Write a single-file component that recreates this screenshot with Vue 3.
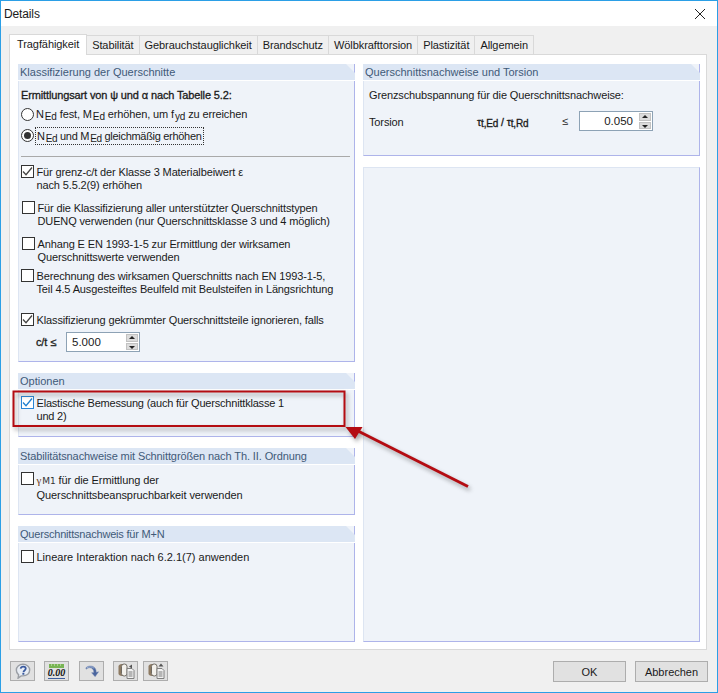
<template>
  <div class="dialog">
    <header class="titlebar">
      <span>Details</span>
      <svg class="close" width="12" height="12" viewBox="0 0 12 12"><path d="M1 1l10 10M11 1L1 11" stroke="#222" stroke-width="1" /></svg>
    </header>

    <div class="body">
      <nav class="tabs">
        <div v-for="(t, i) in tabs" :key="t" class="tab" :class="{ active: i === 0 }">{{ t }}</div>
      </nav>

      <section class="panel">
        <div class="col">
          <div class="group g1">
            <h3 class="group-head">Klassifizierung der Querschnitte</h3>
            <div class="group-body">
              <p class="lead">Ermittlungsart von ψ und α nach Tabelle 5.2:</p>
              <div class="radio-row r1">
                <span class="radio"></span>
                <span class="txt">N<sub>Ed</sub> fest, M<sub>Ed</sub> erhöhen, um f<sub>yd</sub> zu erreichen</span>
              </div>
              <div class="radio-row r2">
                <span class="radio on"></span>
                <span class="txt focus">N<sub>Ed</sub> und M<sub>Ed</sub> gleichmäßig erhöhen</span>
              </div>
              <hr class="sep" />
              <label class="check c1">
                <span class="box"><svg width="11" height="11" viewBox="0 0 11 11"><path d="M1 5.500l3 3.200L10 1.500" fill="none" stroke="#444" stroke-width="1.300" /></svg></span>
                <span class="txt">Für grenz-c/t der Klasse 3 Materialbeiwert ε<br />nach 5.5.2(9) erhöhen</span>
              </label>
              <label class="check c2">
                <span class="box"></span>
                <span class="txt">Für die Klassifizierung aller unterstützter Querschnittstypen<br />DUENQ verwenden (nur Querschnittsklasse 3 und 4 möglich)</span>
              </label>
              <label class="check c3">
                <span class="box"></span>
                <span class="txt">Anhang E EN 1993-1-5 zur Ermittlung der wirksamen<br />Querschnittswerte verwenden</span>
              </label>
              <label class="check c4">
                <span class="box"></span>
                <span class="txt">Berechnung des wirksamen Querschnitts nach EN 1993-1-5,<br />Teil 4.5 Ausgesteiftes Beulfeld mit Beulsteifen in Längsrichtung</span>
              </label>
              <label class="check c5">
                <span class="box"><svg width="11" height="11" viewBox="0 0 11 11"><path d="M1 5.500l3 3.200L10 1.500" fill="none" stroke="#444" stroke-width="1.300" /></svg></span>
                <span class="txt">Klassifizierung gekrümmter Querschnittsteile ignorieren, falls</span>
              </label>
              <div class="ct-row">
                <span class="ct-label">c/t ≤</span>
                <div class="spin ct-spin">
                  <span class="spin-val left">5.000</span>
                  <span class="spin-btns"><i class="up"></i><i class="down"></i></span>
                </div>
              </div>
            </div>
          </div>

          <div class="group g2">
            <h3 class="group-head">Optionen</h3>
            <div class="group-body">
              <label class="check c6">
                <span class="box blue"><svg width="11" height="11" viewBox="0 0 11 11"><path d="M1 5.500l3 3.200L10 1.500" fill="none" stroke="#1e7fd0" stroke-width="1.300" /></svg></span>
                <span class="txt">Elastische Bemessung (auch für Querschnittklasse 1<br />und 2)</span>
              </label>
            </div>
          </div>

          <div class="group g3">
            <h3 class="group-head">Stabilitätsnachweise mit Schnittgrößen nach Th. II. Ordnung</h3>
            <div class="group-body">
              <label class="check c7">
                <span class="box"></span>
                <span class="txt"><em class="gamma">γ<small>M1</small></em> für die Ermittlung der<br />Querschnittsbeanspruchbarkeit verwenden</span>
              </label>
            </div>
          </div>

          <div class="group g4">
            <h3 class="group-head">Querschnittsnachweis für M+N</h3>
            <div class="group-body">
              <label class="check c8">
                <span class="box"></span>
                <span class="txt">Lineare Interaktion nach 6.2.1(7) anwenden</span>
              </label>
            </div>
          </div>
        </div>

        <div class="col">
          <div class="group g5">
            <h3 class="group-head">Querschnittsnachweise und Torsion</h3>
            <div class="group-body">
              <p class="plain">Grenzschubspannung für die Querschnittsnachweise:</p>
              <div class="torsion">
                <span class="tor-label">Torsion</span>
                <span class="tor-math">τ<sub>t,Ed</sub> / τ<sub>t,Rd</sub></span>
                <span class="tor-le">≤</span>
                <div class="spin tor-spin">
                  <span class="spin-val">0.050</span>
                  <span class="spin-btns"><i class="up"></i><i class="down"></i></span>
                </div>
              </div>
            </div>
          </div>
          <div class="group g6"></div>
        </div>
      </section>

      <footer class="footer">
        <div class="tools">
          <button class="tool">
            <svg width="18" height="16" viewBox="0 0 20 18">
              <path d="M10 1.500c4.400 0 7.500 2.800 7.500 6.500s-3.100 6.500-7.500 6.500H8L4.500 17l.6-3.600C3.400 12.200 2.500 10.200 2.500 8 2.500 4.300 5.600 1.500 10 1.500z" fill="#e8edf4" stroke="#9a9ea4" stroke-width="1.600" />
              <path d="M7.300 6.300C7.700 4.700 9 4 10.300 4c1.700 0 2.800 1 2.800 2.300 0 2-2.600 2.100-2.600 4" fill="none" stroke="#3a5a9e" stroke-width="2" />
              <rect x="9.300" y="11.200" width="2.200" height="2" fill="#3a5a9e" />
            </svg>
          </button>
          <button class="tool">
            <span class="zero">
              <svg width="15" height="4" viewBox="0 0 15 4"><rect width="15" height="4" fill="#78b454" /><path d="M2.500 0v2M5.500 0v2M8.500 0v2M11.500 0v2" stroke="#a8d28e" stroke-width="1" /></svg>
              <span class="zero-num">0.00</span>
            </span>
          </button>
          <button class="tool t3">
            <svg width="18" height="16" viewBox="0 0 20 18">
              <path d="M3 5.500C6 2.500 11 2.500 13.500 5.800c1 1.400 1.300 3 1.200 4.700l2.800-.7-4 5.700-4-4.600 2.500-.3c0-1.700-.4-3-1.300-3.900C9 4.900 6 4.800 3.500 7z" fill="#4a659e" stroke="#7b8db3" stroke-width=".5" />
              <path d="M4 5.600C6.500 3.800 10 3.800 12.500 6" fill="none" stroke="#a9bcdd" stroke-width="1" />
            </svg>
          </button>
          <button class="tool gap-s">
            <svg width="20" height="18" viewBox="0 0 20 18">
              <path d="M2.500 4.500C2.500 3 4 2 6 2h1.500v12H6c-2 0-3.500-1-3.500-2.500z" fill="#8d7a62" />
              <rect x="5.500" y="2" width="5.500" height="12" rx="2.500" fill="#f3f1ec" stroke="#6f6a62" />
              <path d="M11 6.500h5l2 2v8h-7z" fill="#f2f2f2" stroke="#808080" />
              <path d="M12.500 10h4M12.500 12h4M12.500 14h4" stroke="#7a7a7a" />
              <path d="M13 4.500l3-2v4z" fill="#555" />
            </svg>
          </button>
          <button class="tool">
            <svg width="20" height="18" viewBox="0 0 20 18">
              <path d="M2.500 4.500C2.500 3 4 2 6 2h1.500v12H6c-2 0-3.500-1-3.500-2.500z" fill="#8d7a62" />
              <rect x="5.500" y="2" width="5.500" height="12" rx="2.500" fill="#f3f1ec" stroke="#6f6a62" />
              <path d="M11 6.500h5l2 2v8h-7z" fill="#f2f2f2" stroke="#808080" />
              <path d="M12.500 10h4M12.500 12h4M12.500 14h4" stroke="#7a7a7a" />
              <path d="M15 1.500l2.500 3h-5z" fill="#555" />
            </svg>
          </button>
        </div>
        <div class="actions">
          <button class="btn">OK</button>
          <button class="btn">Abbrechen</button>
        </div>
      </footer>
    </div>

    <!-- rote Markierung liegt frei ueber dem Dialog -->
    <svg class="annot" width="718" height="693" viewBox="0 0 718 693">
      <rect x="13.500" y="391.500" width="331" height="34.500" fill="none" stroke="#b40c12" stroke-width="2" />
      <path d="M468 486.500L358 431" stroke="#b40c12" stroke-width="3" fill="none" />
      <path d="M345.500 427L362.500 427 355 439z" fill="#b40c12" />
    </svg>
  </div>
</template>

<script setup>
const tabs = [
  'Tragfähigkeit',
  'Stabilität',
  'Gebrauchstauglichkeit',
  'Brandschutz',
  'Wölbkrafttorsion',
  'Plastizität',
  'Allgemein',
]
</script>

<style scoped>
.dialog {
  position: relative;
  box-sizing: border-box;
  width: 718px;
  height: 693px;
  border: 1px solid #2b9fe6;
  background: #f0f0f0;
  display: flex;
  flex-direction: column;
  overflow: hidden;
  font-family: "Liberation Sans", Arial, sans-serif;
  font-size: 11px;
  letter-spacing: -.13px;
  color: #1a1a1a;
}
.titlebar {
  height: 25px;
  flex: none;
  background: #fff;
  display: flex;
  align-items: center;
  justify-content: space-between;
  padding: 0 11px 0 3px;
  font-size: 12px;
}
.close { display: block; }

.body {
  flex: 1;
  display: flex;
  flex-direction: column;
  padding: 8px 10px 0 8px;
}
.tabs {
  display: flex;
  align-items: flex-end;
  height: 20px;
  flex: none;
  position: relative;
  z-index: 1;
}
.tab {
  height: 18px;
  line-height: 19px;
  padding: 0 5px;
  background: #f0f0f0;
  border: 1px solid #d9d9d9;
  border-bottom: 0;
  border-left: 0;
  box-sizing: content-box;
  white-space: nowrap;
  letter-spacing: -.08px;
}
.tab.active {
  height: 20px;
  line-height: 19px;
  padding: 0 7px;
  background: #fff;
  border-left: 1px solid #d9d9d9;
  margin-bottom: -1px;
}

.panel {
  box-sizing: border-box;
  width: 698px;
  height: 596px;
  flex: none;
  background: #fff;
  border: 1px solid #d9d9d9;
  padding: 9px 6px 7px 8px;
  display: grid;
  grid-template-columns: 337px 337px;
  column-gap: 8px;
}
.col {
  display: flex;
  flex-direction: column;
  gap: 11px;
  min-height: 0;
}
.group {
  box-sizing: border-box;
  background: #eff3f9;
  border-left: 1px solid #dde5f2;
  border-right: 1px solid #aeb4ea;
  border-bottom: 1px solid #aeb4ea;
}
.g1 { height: 298px; }
.g2 { height: 64px; }
.g3 { height: 67px; }
.g4 { flex: 1; }
.g5 { height: 92px; }
.g6 { flex: 1; border-top: 1px solid #dde5f2; }

.group-head {
  margin: 0 -1px 0 -1px;
  height: 16px;
  line-height: 16px;
  padding-left: 2px;
  background: #dce6f4;
  color: #3f5a78;
  font-size: 11px;
  font-weight: 400;
  letter-spacing: 0;
  clip-path: polygon(0 0, calc(100% - 9px) 0, 100% 9px, 100% 100%, 0 100%);
  border-bottom: 1px solid #fff;
  box-sizing: content-box;
}
.g3 .group-head { letter-spacing: -.1px; }
.g4 .group-head { letter-spacing: -.2px; }
.group-body { padding: 0 2px; }

p { margin: 0; }
.lead {
  margin-top: 7px;
  height: 14px;
  line-height: 14px;
  -webkit-text-stroke: .3px #1a1a1a;
}
.plain {
  margin: 7px 0 0 3px;
  line-height: 14px;
  height: 14px;
}
sub {
  font-size: 10px;
  vertical-align: -2px;
  line-height: 0;
  margin-left: 1px;
}
.txt { line-height: 13px; }

.radio-row {
  display: flex;
  align-items: center;
  height: 17px;
  gap: 2px;
}
.r1 { margin-top: 4px; }
.r2 { margin-top: 4px; }
.radio {
  box-sizing: border-box;
  width: 13px;
  height: 13px;
  flex: none;
  border-radius: 50%;
  border: 1px solid #333;
  background: #fff;
  position: relative;
}
.radio.on::after {
  content: "";
  position: absolute;
  inset: 2px;
  border-radius: 50%;
  background: #333;
}
.focus {
  outline: 1px dotted #333;
  padding: 1px 1px;
  line-height: 14px;
  letter-spacing: -.3px;
}
.sep {
  margin: 12px 2px 0 0;
  border: 0;
  border-top: 1px solid #a9a9a9;
  height: 0;
}

.check {
  display: flex;
  align-items: flex-start;
  gap: 2.500px;
}
.box {
  box-sizing: border-box;
  flex: none;
  width: 13px;
  height: 13px;
  border: 1px solid #333;
  background: #fff;
  display: flex;
  align-items: center;
  justify-content: center;
}
.box.blue { border-color: #2a86d6; }
.check .txt { margin-top: 1px; }
.c1 { margin-top: 8px; }
.c2 { margin: 9px 0 0 1px; }
.c3 { margin: 9px 0 0 1px; }
.c4 { margin: 5px 0 0 0; }
.c5 { margin-top: 17px; }
.c6 { margin-top: 6px; letter-spacing: -.2px; }
.c7 { margin-top: 7px; letter-spacing: -.08px; }
.c7 .txt { line-height: 14px; }
.c8 { margin-top: 7px; letter-spacing: 0; }

.gamma { font-style: normal; color: #6b3b14; font-family: "Liberation Serif", serif; }
.gamma small { font-size: 9px; margin-left: 1px; font-family: "DejaVu Sans", sans-serif; color: #333; }

.ct-row {
  display: flex;
  align-items: center;
  margin: 5px 0 0 15px;
  gap: 9px;
}
.ct-label { -webkit-text-stroke: .3px #1a1a1a; width: 21px; white-space: nowrap; }
.spin {
  box-sizing: border-box;
  width: 74px;
  height: 20px;
  background: #fff;
  border: 1px solid #8da2b5;
  display: flex;
  align-items: center;
  justify-content: flex-end;
  padding-right: 1px;
}
.spin-val {
  flex: 1;
  text-align: right;
  padding-right: 6px;
  font-size: 11.500px;
  letter-spacing: 0;
}
.spin-val.left { text-align: left; padding-left: 5px; }
.spin-btns {
  display: flex;
  flex-direction: column;
  gap: 1px;
  width: 12px;
  height: 16px;
}
.spin-btns i {
  flex: 1;
  background: #dcdcdc;
  border: 1px solid #c2c2c2;
  position: relative;
}
.spin-btns i::after {
  content: "";
  position: absolute;
  left: 2px;
  width: 0;
  height: 0;
  border-left: 3px solid transparent;
  border-right: 3px solid transparent;
}
.up::after { top: 1px; border-bottom: 3px solid #222; }
.down::after { top: 2px; border-top: 3px solid #222; }

.torsion {
  display: flex;
  align-items: center;
  margin: 9px 0 0 3px;
  height: 20px;
}
.tor-label { width: 108px; margin-top: 2px; }
.tor-math { width: 85px; -webkit-text-stroke: .3px #1a1a1a; font-size: 10.500px; margin-top: 1px; }
.tor-math sub { font-size: 10px; vertical-align: -1px; margin-left: 0; }
.tor-le { width: 17px; }

.footer {
  flex: 1;
  display: flex;
  justify-content: space-between;
  align-items: flex-start;
  padding: 11px 0 0 1px;
  margin-right: -1px;
}
.tools { display: flex; gap: 9px; }
.tool {
  box-sizing: border-box;
  width: 25px;
  height: 20px;
  padding: 0;
  background: #e1e1e1;
  border: 1px solid #adadad;
  display: flex;
  align-items: center;
  justify-content: center;
}
.t3 { margin-left: 1px; }
.gap-s { margin-right: -4px; }
.zero { display: flex; flex-direction: column; align-items: center; line-height: 1; }
.zero-num {
  font-family: "Liberation Serif", serif;
  font-style: italic;
  font-weight: 700;
  font-size: 10px;
  line-height: 10px;
  color: #111;
  border-bottom: 1px solid #3f5f9c;
}
.actions { display: flex; gap: 9px; }
.btn {
  box-sizing: border-box;
  width: 73px;
  height: 21px;
  padding: 0;
  background: #e1e1e1;
  border: 1px solid #adadad;
  font-family: inherit;
  font-size: 11px;
  color: #1a1a1a;
}

.annot {
  position: absolute;
  left: -1px;
  top: -1px;
  pointer-events: none;
  filter: drop-shadow(2px 3px 2px rgba(60, 60, 60, .45));
}
</style>
